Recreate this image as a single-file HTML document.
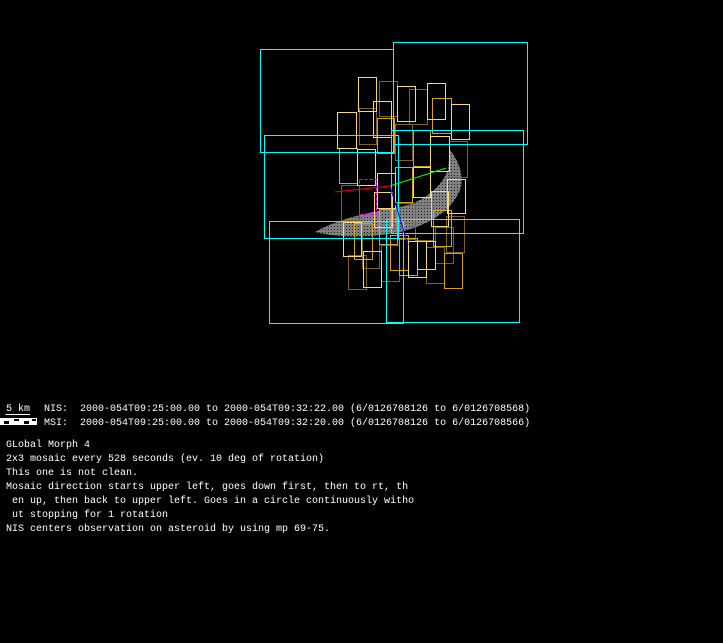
<!DOCTYPE html>
<html><head><style>
html,body{margin:0;padding:0;background:#000;width:723px;height:643px;overflow:hidden}
.t{position:absolute;color:#fff;font-family:"Liberation Mono","DejaVu Sans Mono",monospace;font-size:10px;line-height:14px;white-space:pre;letter-spacing:0}
</style></head><body>
<svg width="723" height="643" style="position:absolute;left:0;top:0" xmlns="http://www.w3.org/2000/svg">
<defs><pattern id="dots" width="3" height="3" patternUnits="userSpaceOnUse"><rect width="3" height="3" fill="#808080"/><rect x="1" y="1" width="1" height="1" fill="#222"/></pattern></defs>
<g fill="url(#dots)">
<path d="M315,232 C340,218 370,212 395,208 C420,204 440,190 448,170 L450,150 C458,160 465,175 460,190 C452,210 430,225 400,232 C370,238 340,238 315,232 Z"/>
</g>
<g fill="none" stroke-width="1">
<g stroke="#806020">
<rect x="379.5" y="81.5" width="18" height="35"/><rect x="409.5" y="89.5" width="18" height="35"/><rect x="359.5" y="108.5" width="17" height="36"/><rect x="395.5" y="124.5" width="17" height="36"/><rect x="449.5" y="141.5" width="18" height="36"/><rect x="341.5" y="185.5" width="18" height="35"/><rect x="415.5" y="205.5" width="18" height="35"/><rect x="446.5" y="216.5" width="18" height="36"/><rect x="348.5" y="255.5" width="18" height="34"/><rect x="381.5" y="245.5" width="18" height="36"/><rect x="426.5" y="247.5" width="18" height="36"/><rect x="435.5" y="227.5" width="18" height="36"/><rect x="397.5" y="203.5" width="18" height="36"/><rect x="362.5" y="233.5" width="17" height="35"/>
</g>
<g stroke="#d8a020">
<rect x="432.5" y="98.5" width="19" height="35"/><rect x="339.5" y="148.5" width="18" height="35"/><rect x="377.5" y="118.5" width="17" height="35"/><rect x="413.5" y="130.5" width="17" height="36"/><rect x="395.5" y="167.5" width="17" height="35"/><rect x="379.5" y="209.5" width="18" height="35"/><rect x="354.5" y="223.5" width="18" height="36"/><rect x="433.5" y="210.5" width="18" height="36"/><rect x="399.5" y="238.5" width="18" height="37"/><rect x="444.5" y="253.5" width="18" height="35"/><rect x="390.5" y="235.5" width="18" height="35"/>
</g>
<g stroke="#f8d878">
<rect x="358.5" y="77.5" width="18" height="34"/><rect x="397.5" y="86.5" width="18" height="35"/><rect x="427.5" y="83.5" width="18" height="36"/><rect x="451.5" y="104.5" width="18" height="35"/><rect x="337.5" y="112.5" width="19" height="36"/><rect x="373.5" y="101.5" width="18" height="36"/><rect x="430.5" y="136.5" width="19" height="35"/><rect x="357.5" y="149.5" width="18" height="36"/><rect x="377.5" y="173.5" width="18" height="35"/><rect x="413.5" y="167.5" width="17" height="30"/><rect x="431.5" y="191.5" width="17" height="35"/><rect x="447.5" y="179.5" width="18" height="34"/><rect x="374.5" y="192.5" width="18" height="35"/><rect x="343.5" y="222.5" width="18" height="34"/><rect x="363.5" y="251.5" width="18" height="36"/><rect x="408.5" y="241.5" width="18" height="36"/><rect x="417.5" y="241.5" width="18" height="28"/>
</g>
<g stroke="#00ffff">
<rect x="260.5" y="49.5" width="133" height="103"/>
<rect x="393.5" y="42.5" width="134" height="102"/>
<rect x="264.5" y="135.5" width="134" height="103"/>
<rect x="391.5" y="130.5" width="132" height="103"/>
<rect x="269.5" y="221.5" width="134" height="102"/>
<rect x="386.5" y="219.5" width="133" height="103"/>
</g>
<rect x="359.5" y="179.5" width="17" height="35" stroke="#ff00ff" stroke-dasharray="3,2"/>
<path d="M335,192 L390,186" stroke="#ff0000"/>
<path d="M390,186 L446,168" stroke="#00ff00"/>
<path d="M390,186 L408,245" stroke="#0000ff"/>
<path d="M5.5,414.5 H30" stroke="#fff"/>
</g>
<rect x="0" y="418" width="37" height="7" fill="#fff"/>
<g fill="#000"><rect x="4" y="421" width="5" height="3"/><rect x="14" y="419" width="5" height="2"/><rect x="24" y="421" width="5" height="3"/><rect x="32" y="419" width="4" height="2"/></g>
</svg>
<div class="t" style="left:6px;top:403px">5 km</div>
<div class="t" style="left:44px;top:403px">NIS:  2000-054T09:25:00.00 to 2000-054T09:32:22.00 (6/0126708126 to 6/0126708568)
MSI:  2000-054T09:25:00.00 to 2000-054T09:32:20.00 (6/0126708126 to 6/0126708566)</div>
<div class="t" style="left:6px;top:439px">GLobal Morph 4
2x3 mosaic every 528 seconds (ev. 10 deg of rotation)
This one is not clean.
Mosaic direction starts upper left, goes down first, then to rt, th
 en up, then back to upper left. Goes in a circle continuously witho
 ut stopping for 1 rotation
NIS centers observation on asteroid by using mp 69-75.</div>
</body></html>
